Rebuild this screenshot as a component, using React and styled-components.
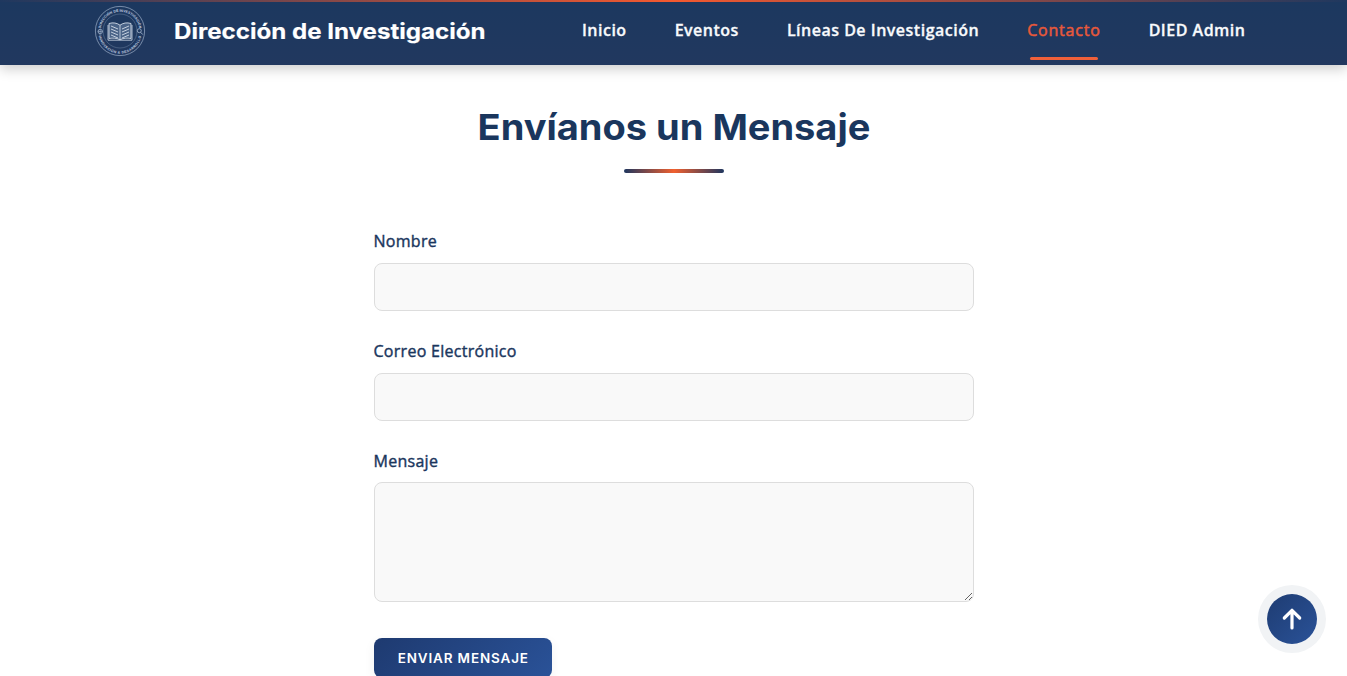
import React from 'react';
import styled, { createGlobalStyle, css } from 'styled-components';

const GlobalStyle = createGlobalStyle`
  *, *::before, *::after { box-sizing: border-box; }
  html, body { margin: 0; height: 100%; overflow: hidden; }
  body { background: #fff; font-family: "Open Sans", sans-serif; color: #1a365d; }
`;

const Page = styled.div`
  height: 676px;
  overflow: hidden;
  position: relative;
`;

const Header = styled.header`
  position: relative;
  height: 65px;
  background: linear-gradient(180deg, #1c385f, #21385f);
  box-shadow: 0 4px 12px rgba(0, 0, 0, 0.2);
  &::before {
    content: "";
    position: absolute;
    inset: 0 0 auto;
    height: 2px;
    background: linear-gradient(90deg, #1f385f, #f4592f 50%, #1f385f);
  }
`;

const HeaderInner = styled.div`
  width: 1160px;
  height: 61px;
  margin: 0 auto;
  display: flex;
  align-items: center;
  justify-content: space-between;
`;

const Brand = styled.div`
  display: flex;
  align-items: center;
  gap: 28px;
`;

const Seal = styled.svg`
  width: 52px;
  height: 52px;
  flex: none;
`;

const BrandName = styled.span`
  width: 312px;
  color: #fff;
  font: 700 21.4px/30px Inter, sans-serif;
  -webkit-text-stroke: 0.15px currentColor;
  white-space: nowrap;
  transform: scaleX(1.127);
  transform-origin: left;
`;

const Nav = styled.nav`
  display: flex;
  gap: 32px;
  padding-bottom: 2px;
`;

const NavLink = styled.a`
  position: relative;
  padding: 8px;
  font-size: 16px;
  line-height: 24px;
  font-weight: 600;
  letter-spacing: 0.5px;
  white-space: nowrap;
  color: #f8fafc;
  -webkit-text-stroke: 0.3px currentColor;
  ${({ $active }) => $active && css`
    color: #e8593a;
    font-weight: 400;
    letter-spacing: 0.8px;
    -webkit-text-stroke: 0.5px currentColor;
    &::after {
      content: "";
      position: absolute;
      left: 11px;
      width: 68px;
      bottom: -10px;
      height: 3px;
      border-radius: 2px;
      background: #f0603a;
    }
  `}
`;

const Main = styled.main`
  width: 600px;
  margin: 0 auto;
  padding-top: 38px;
`;

const Title = styled.h1`
  margin: 0;
  font: 700 35.6px/50px Inter, sans-serif;
  text-align: center;
  white-space: nowrap;
  color: #1a365d;
  transform: scaleX(1.068);
`;

const Rule = styled.div`
  width: 100px;
  height: 4px;
  margin: 16px auto 56px;
  border-radius: 2px;
  background: linear-gradient(90deg, #1f365f, #f0602f 50%, #1f365f);
`;

const Form = styled.form`
  display: flex;
  flex-direction: column;
  align-items: flex-start;
`;

const Field = styled.label`
  display: flex;
  flex-direction: column;
  gap: 10px;
  width: 100%;
  margin-bottom: ${({ $gap }) => $gap}px;
  font-size: 16px;
  line-height: 24px;
  font-weight: 400;
  letter-spacing: 0.28px;
  -webkit-text-stroke: 0.4px currentColor;
`;

const controlStyle = css`
  display: block;
  width: 100%;
  border: 1px solid #ddd;
  border-radius: 8px;
  background: #f9f9f9;
  font: 16px "Open Sans", sans-serif;
  padding: 12px 16px;
  outline: none;
`;

const Input = styled.input`
  ${controlStyle}
  height: 48px;
`;

const TextArea = styled.textarea`
  ${controlStyle}
  height: 120px;
  margin-top: -1px;
  resize: vertical;
`;

const Submit = styled.button`
  width: 178px;
  height: 40px;
  padding: 1px 0 0 1px;
  border: 0;
  border-radius: 8px;
  color: #fff;
  background: linear-gradient(135deg, #1e3a70, #2a5298);
  box-shadow: 0 4px 12px rgba(0, 0, 0, 0.06);
  font: 600 12.6px/40px Inter, sans-serif;
  letter-spacing: 0.8px;
  white-space: nowrap;
`;

const SubmitText = styled.span`
  display: inline-block;
  transform: scaleX(1.07);
`;

const ToTop = styled.button`
  position: absolute;
  left: 1267px;
  top: 594px;
  width: 50px;
  height: 50px;
  padding: 0;
  border: 0;
  border-radius: 50%;
  display: grid;
  place-items: center;
  background: linear-gradient(135deg, #1e3c72, #2a5298);
  box-shadow: 0 0 0 9px #f1f3f5;
`;

const links = ['Inicio', 'Eventos', 'Líneas De Investigación', 'Contacto', 'DIED Admin'];

function SealLogo() {
  return (
    <Seal viewBox="0 0 52 52" fill="none" stroke="#b4c5dc">
      <defs>
        <path id="sealTop" d="M6.7 26a19.3 19.3 0 0 1 38.6 0" />
        <path id="sealBottom" d="M4.4 27a21.6 21.6 0 0 0 43.2 0" />
      </defs>
      <circle cx="26" cy="26" r="24.6" strokeWidth=".8" opacity=".75" />
      <circle cx="26" cy="26" r="17" strokeWidth=".6" opacity=".45" />
      <g fill="#c4d1e4" stroke="none" fontFamily="Liberation Sans" fontSize="3.5" fontWeight="700" textAnchor="middle">
        <text><textPath href="#sealTop" startOffset="50%" textLength="55">DIRECCIÓN DE INVESTIGACIÓN</textPath></text>
        <text><textPath href="#sealBottom" startOffset="50%" textLength="59">INNOVACIÓN &amp; DESARROLLO</textPath></text>
      </g>
      <circle cx="6.2" cy="26.5" r="2.2" strokeWidth=".7" />
      <path d="M4 26.5h4.4M6.2 24.3v4.4M5 30h2.4" strokeWidth=".5" />
      <circle cx="45.3" cy="25.7" r="2" strokeWidth=".7" />
      <path d="m46.7 27.3 2 2.2" strokeWidth=".8" />
      <path d="M15 18.5c4-1.3 8-.6 11 1.7 3-2.3 7-3 11-1.7v15c-4-.8-8-.3-11 1.3-3-1.6-7-2.1-11-1.3z" fill="#8ba4c4" fillOpacity=".4" stroke="#e2eaf4" strokeWidth=".8" />
      <path d="M26 20.2v14.6M14 20v15.2h24V20" stroke="#d3deec" strokeWidth=".8" />
      <path d="m17 21 7 3m-7 0 7 3m-7 0 7 3m-7 0 7 3M35 21l-7 3m7 0-7 3m7 0-7 3m7 0-7 3" stroke="#e3ebf5" strokeWidth=".8" />
    </Seal>
  );
}

export default function App() {
  return (
    <>
      <GlobalStyle />
      <Page>
        <Header>
          <HeaderInner>
            <Brand>
              <SealLogo />
              <BrandName>Dirección de Investigación</BrandName>
            </Brand>
            <Nav>
              {links.map((label) => (
                <NavLink key={label} $active={label === 'Contacto'}>{label}</NavLink>
              ))}
            </Nav>
          </HeaderInner>
        </Header>
        <Main>
          <Title>Envíanos un Mensaje</Title>
          <Rule />
          <Form>
            <Field $gap={28}>Nombre<Input type="text" /></Field>
            <Field $gap={28}>Correo Electrónico<Input type="email" /></Field>
            <Field $gap={36}>Mensaje<TextArea /></Field>
            <Submit type="button"><SubmitText>ENVIAR MENSAJE</SubmitText></Submit>
          </Form>
        </Main>
        <ToTop type="button" aria-label="Subir">
          <svg width="20" height="22" viewBox="0 0 20 22" fill="none" stroke="#fff" strokeWidth="3.2" strokeLinecap="round" strokeLinejoin="round">
            <path d="M10 20V2.5M2.3 10 10 2.3 17.7 10" />
          </svg>
        </ToTop>
      </Page>
    </>
  );
}
